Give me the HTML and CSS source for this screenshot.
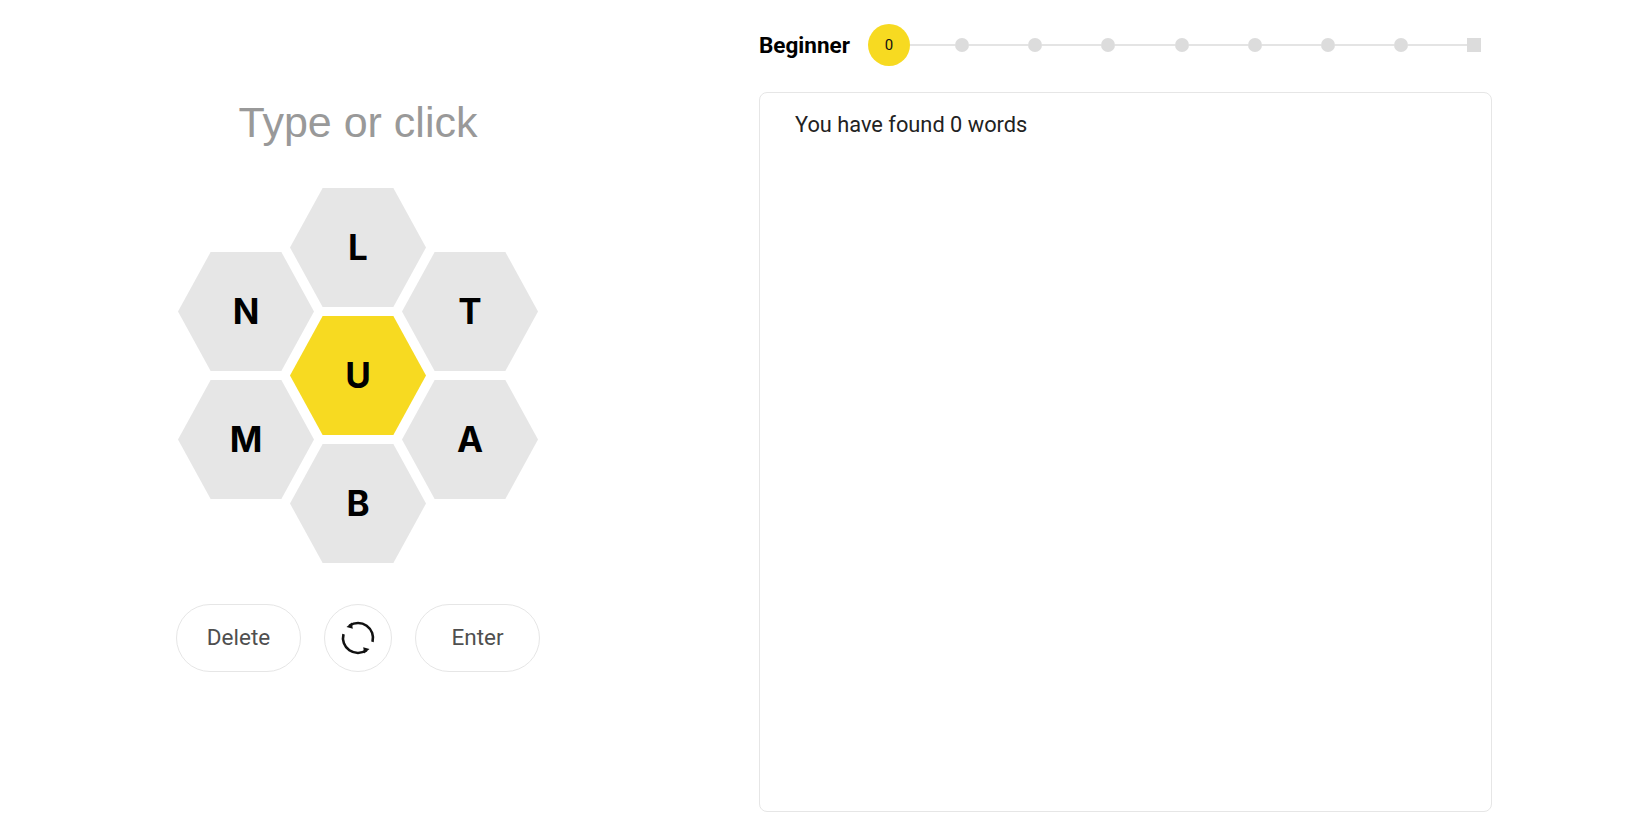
FILE: index.html
```html
<!DOCTYPE html>
<html lang="en">
<head>
  <meta charset="UTF-8" />
  <title>Spelling Bee</title>
  <link rel="stylesheet" href="styles.css">
</head>
<body>

  <main class="game">
    <section class="play">
      <div class="guess">Type or click</div>

      <div class="hive">
        <div class="hive-col">
          <div class="cell">N</div>
          <div class="cell">M</div>
        </div>
        <div class="hive-col">
          <div class="cell">L</div>
          <div class="cell center">U</div>
          <div class="cell">B</div>
        </div>
        <div class="hive-col">
          <div class="cell">T</div>
          <div class="cell">A</div>
        </div>
      </div>

      <div class="controls">
        <button class="pill">Delete</button>
        <button class="pill round" aria-label="Shuffle">
          <svg width="36" height="36" viewBox="0 0 36 36" fill="none">
            <path d="M9.4 5.700A15 15 0 0 1 32.500 21.900" stroke="#111" stroke-width="2.600"/>
            <path d="M3.500 14.100A15 15 0 0 0 26.600 30.300" stroke="#111" stroke-width="2.600"/>
            <path d="M6.500 7L11.800 2.500L12.800 8.800Z" fill="#111"/>
            <path d="M29.500 29L24.200 33.500L23.200 27.200Z" fill="#111"/>
          </svg>
        </button>
        <button class="pill">Enter</button>
      </div>
    </section>

    <section class="status">
      <div class="progress">
        <strong class="rank">Beginner</strong>
        <div class="track">
          <span class="score">0</span>
          <i class="line"></i><span class="dot"></span>
          <i class="line"></i><span class="dot"></span>
          <i class="line"></i><span class="dot"></span>
          <i class="line"></i><span class="dot"></span>
          <i class="line"></i><span class="dot"></span>
          <i class="line"></i><span class="dot"></span>
          <i class="line"></i><span class="dot"></span>
          <i class="line"></i><span class="dot last"></span>
        </div>
      </div>

      <div class="words">You have found 0 words</div>
    </section>
  </main>

</body>
</html>
```

FILE: styles.css
```css
* { box-sizing: border-box; margin: 0; padding: 0; }

html, body {
  height: 100%;
  background-color: #fff;
  font-family: 'Liberation Sans', Arial, sans-serif;
  color: #111;
  overflow: hidden;
}

.game {
  display: flex;
  height: 100%;
}

.play {
  width: 716px;
  margin-right: 43px;
  padding-top: 96px;
  display: flex;
  flex-direction: column;
  align-items: center;
}

.guess {
  font-size: 43px;
  line-height: 52px;
  color: #999;
}

.hive {
  display: flex;
  align-items: center;
  justify-content: center;
  margin-top: 40px;
}

.hive-col {
  display: flex;
  flex-direction: column;
  gap: 9px;
}

.hive-col + .hive-col {
  margin-left: -24px;
}

.cell {
  width: 136px;
  height: 119px;
  padding-bottom: 2px;
  display: flex;
  align-items: center;
  justify-content: center;
  background-color: #e6e6e6;
  clip-path: polygon(24% 0, 76% 0, 100% 50%, 76% 100%, 24% 100%, 0 50%);
  font-family: 'Inter', sans-serif;
  font-size: 35px;
  font-weight: 700;
  color: #000;
}

.cell.center {
  background-color: #f7da21;
}

.controls {
  display: flex;
  gap: 23px;
  margin-top: 41px;
}

.pill {
  width: 125px;
  height: 68px;
  padding-bottom: 2px;
  display: flex;
  align-items: center;
  justify-content: center;
  background-color: #fff;
  border: 1.5px solid #e6e6e6;
  border-radius: 34px;
  font-family: 'Roboto', sans-serif;
  font-size: 22.500px;
  color: #4f4f4f;
}

.pill.round {
  width: 68px;
  padding-bottom: 0;
}

.status {
  width: 733px;
  height: 100%;
  display: flex;
  flex-direction: column;
}

.progress {
  display: flex;
  align-items: center;
  height: 42px;
  margin-top: 24px;
}

.rank {
  width: 109px;
  font-family: 'Roboto', sans-serif;
  font-size: 22.500px;
  color: #000;
}

.track {
  width: 613px;
  display: flex;
  align-items: center;
}

.score {
  position: relative;
  width: 42px;
  height: 42px;
  margin-right: -14px;
  flex-shrink: 0;
  display: flex;
  align-items: center;
  justify-content: center;
  background-color: #f7da21;
  border-radius: 50%;
  font-family: 'Roboto', sans-serif;
  font-size: 15px;
}

.line {
  flex: 1;
  height: 2px;
  background-color: #e4e4e4;
}

.dot {
  width: 14px;
  height: 14px;
  flex-shrink: 0;
  background-color: #dcdcdc;
  border-radius: 50%;
}

.dot.last {
  border-radius: 0;
}

.words {
  margin-top: 26px;
  height: 720px;
  padding: 18px 35px;
  border: 1.5px solid #e6e6e6;
  border-radius: 8px;
  font-family: 'Roboto', sans-serif;
  font-size: 21.800px;
  line-height: 28px;
  color: #222;
}
```
